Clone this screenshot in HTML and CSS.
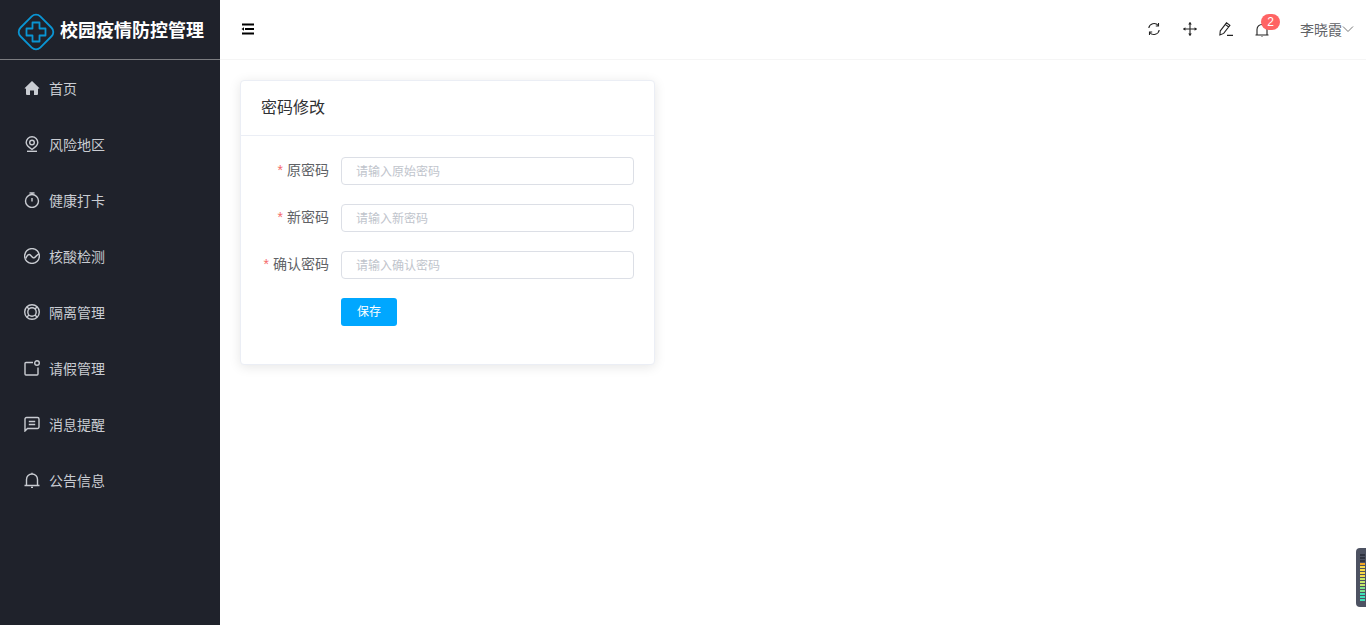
FILE: index.html
```html
<!DOCTYPE html>
<html lang="zh-CN">
<head>
  <meta charset="UTF-8" />
  <title>校园疫情防控管理</title>
  <link rel="stylesheet" href="styles.css">
</head>
<body>
  <aside class="sidebar">
    <div class="logo">
      <svg class="logo-icon" viewBox="0 0 38 38" width="38" height="38" fill="none" stroke="#0a95d3" stroke-width="1.8">
        <rect x="5" y="5" width="28" height="28" rx="6" transform="rotate(45 19 19)"/>
        <path d="M15.500 9.500h7v6h6v7h-6v6h-7v-6h-6v-7h6z" stroke-linejoin="round"/>
      </svg>
      <span class="logo-text">校园疫情防控管理</span>
    </div>
    <nav class="menu">
      <a class="menu-item">
        <svg viewBox="0 0 16 16" width="16" height="16"><path class="solid" d="M8 1 .5 8.300 1.500 8.800 2 8.500V14a1 1 0 0 0 1 1h3V10.500h4V15h3a1 1 0 0 0 1-1V8.500l.5.300 1-.5z"/></svg>
        <span>首页</span>
      </a>
      <a class="menu-item">
        <svg viewBox="0 0 16 16" width="16" height="16"><path d="M8 .8a5.800 5.800 0 0 0-5.800 5.800C2.200 9.800 8 13.500 8 13.500s5.800-3.700 5.800-6.900A5.800 5.800 0 0 0 8 .8z"/><circle cx="8" cy="6.500" r="2.300"/><path d="M3 15.300h10"/></svg>
        <span>风险地区</span>
      </a>
      <a class="menu-item">
        <svg viewBox="0 0 16 16" width="16" height="16"><circle cx="8" cy="9" r="6.500"/><path d="M5.500 1h5M8 1v1.500M8 6v3.500"/></svg>
        <span>健康打卡</span>
      </a>
      <a class="menu-item">
        <svg viewBox="0 0 16 16" width="16" height="16"><circle cx="8" cy="8" r="7.400"/><path d="M1.800 10.500C3 7 5 5.500 6.800 7.500s3 3.500 4.700 1.300 2.200-2.800 3.700-2.800"/></svg>
        <span>核酸检测</span>
      </a>
      <a class="menu-item">
        <svg viewBox="0 0 16 16" width="16" height="16"><circle cx="8" cy="8" r="7.300"/><circle cx="8" cy="8" r="4.200"/><path d="M3 3l2 2M13 3l-2 2M3 13l2-2M13 13l-2-2"/></svg>
        <span>隔离管理</span>
      </a>
      <a class="menu-item">
        <svg viewBox="0 0 16 16" width="16" height="16"><path d="M9 2.500H2a1 1 0 0 0-1 1V14a1 1 0 0 0 1 1h11a1 1 0 0 0 1-1V7.500"/><circle cx="13" cy="3" r="2.300"/></svg>
        <span>请假管理</span>
      </a>
      <a class="menu-item">
        <svg viewBox="0 0 16 16" width="16" height="16"><path d="M1 3a1.500 1.500 0 0 1 1.500-1.500h11A1.500 1.500 0 0 1 15 3v8a1.500 1.500 0 0 1-1.500 1.500H3.500L1 15z"/><path d="M4.800 5.500h6.400M4.800 8.500h6.400"/></svg>
        <span>消息提醒</span>
      </a>
      <a class="menu-item">
        <svg viewBox="0 0 16 16" width="16" height="16"><path d="M.5 13.500h15M2.500 13.500V7.500a5.500 5.500 0 0 1 11 0v6M8 2V.8M7 15.500h2"/></svg>
        <span>公告信息</span>
      </a>
    </nav>
  </aside>

  <div class="main">
    <header class="topbar">
      <svg class="fold" viewBox="0 0 14 14" width="14" height="14"><path d="M1 2.500h12M4 7h9M1 11.500h12" stroke="#000" stroke-width="2"/><path d="M0.500 7 3 5.300v3.400z" fill="#000"/></svg>
      <div class="tools">
        <svg viewBox="0 0 14 14" width="14" height="14"><path d="M1.800 6a5.300 5.300 0 0 1 9.400-2.500M12.200 8a5.300 5.300 0 0 1-9.400 2.500"/><path d="M11.500 1v3H8.800M2.500 13v-3h2.700"/></svg>
        <svg viewBox="0 0 14 14" width="14" height="14"><path d="M7 .5v13M.5 7h13"/><path class="solid" d="M7 0 8.800 2.400H5.200zM7 14 5.200 11.600H8.800zM0 7 2.400 5.200V8.800zM14 7 11.600 8.800V5.200z"/></svg>
        <svg viewBox="0 0 14 14" width="14" height="14"><path d="M1.300 8.800 7.500 .8l3.400 2.600-6.200 8-3.800 1.500zM6.300 2.400l3.400 2.600M8 13.400H14"/></svg>
        <div class="bell">
          <svg viewBox="0 0 14 14" width="14" height="14"><path d="M.5 12h13M2 12V6.500a5 5 0 0 1 10 0V12M6.500 13.800h1"/></svg>
          <span class="badge">2</span>
        </div>
      </div>
      <div class="user">
        <span>李晓霞</span>
        <svg viewBox="0 0 12 12" width="12" height="12"><path d="M1 3.500 6 8.500l5-5" stroke="#777"/></svg>
      </div>
    </header>

    <section class="content">
      <div class="card">
        <div class="card-header">密码修改</div>
        <form class="card-body">
          <div class="form-row">
            <label class="form-label"><i>*</i>原密码</label>
            <input class="form-input" placeholder="请输入原始密码">
          </div>
          <div class="form-row">
            <label class="form-label"><i>*</i>新密码</label>
            <input class="form-input" placeholder="请输入新密码">
          </div>
          <div class="form-row">
            <label class="form-label"><i>*</i>确认密码</label>
            <input class="form-input" placeholder="请输入确认密码">
          </div>
          <div class="form-row">
            <span class="form-label"></span>
            <button class="btn-save" type="button">保存</button>
          </div>
        </form>
      </div>
    </section>
  </div>

  <div class="float-widget">
    <i class="d"></i><i class="d"></i><i class="d"></i>
    <i class="o"></i><i class="y"></i><i class="y"></i><i class="y"></i><i class="y"></i>
    <i class="l"></i><i class="l"></i><i class="l"></i><i class="g"></i><i class="g"></i><i class="c"></i><i class="c"></i><i class="c"></i>
  </div>
</body>
</html>
```

FILE: styles.css
```css
* {
  box-sizing: border-box;
}

html, body {
  height: 100%;
}

body {
  margin: 0;
  display: flex;
  overflow: hidden;
  background-color: #fff;
  font-family: "Liberation Sans", "Noto Sans CJK SC", sans-serif;
  font-size: 14px;
  color: #606266;
}

/* ----------- sidebar ----------- */

.sidebar {
  width: 220px;
  flex-shrink: 0;
  background-color: #1f222b;
}

.logo {
  height: 60px;
  display: flex;
  align-items: center;
  padding-left: 17px;
  border-bottom: 1px solid #7b7c80;
}

.logo-icon {
  flex-shrink: 0;
  margin: 5px 5px 0 0;
}

.logo-text {
  padding-bottom: 2px;
  font-size: 18px;
  font-weight: bold;
  color: #fff;
  white-space: nowrap;
}

.menu {
  display: flex;
  flex-direction: column;
}

.menu-item {
  height: 56px;
  display: flex;
  align-items: center;
  gap: 9px;
  padding-left: 24px;
  color: #c9ccd2;
  font-size: 14px;
}

.menu-item svg {
  fill: none;
  stroke: #c9ccd2;
  stroke-width: 1.400;
}

.menu-item svg .solid {
  fill: #c9ccd2;
  stroke: none;
}

/* ----------- topbar ----------- */

.main {
  flex: 1;
  min-width: 0;
}

.topbar {
  height: 60px;
  display: flex;
  align-items: center;
  padding: 0 0 1px 21px;
  border-bottom: 1px solid #f5f5f5;
}

.fold {
  flex-shrink: 0;
}

.tools {
  display: flex;
  align-items: center;
  gap: 22px;
  margin-left: auto;
  margin-right: 31px;
}

.tools svg {
  display: block;
  fill: none;
  stroke: #222;
  stroke-width: 1.100;
}

.tools svg .solid {
  fill: #222;
  stroke: none;
}

.bell {
  position: relative;
  margin-top: 2px;
}

.badge {
  position: absolute;
  top: -9px;
  left: 6px;
  width: 19px;
  height: 16px;
  border-radius: 8px;
  background-color: #ff6464;
  color: #fff;
  font-size: 12px;
  line-height: 16px;
  text-align: center;
}

.user {
  display: flex;
  align-items: center;
  margin-right: 12px;
  color: #606266;
  font-size: 14px;
}

.user svg {
  fill: none;
  stroke-width: 1;
}

/* ----------- card ----------- */

.content {
  padding: 20px;
}

.card {
  width: 415px;
  height: 285px;
  background-color: #fff;
  border: 1px solid #ebeef5;
  border-radius: 4px;
  box-shadow: 0 2px 12px 0 rgba(0,0,0,0.1);
}

.card-header {
  height: 55px;
  padding-left: 20px;
  border-bottom: 1px solid #ebeef5;
  font-size: 16px;
  line-height: 53px;
  color: #303133;
}

.card-body {
  display: flex;
  flex-direction: column;
  gap: 19px;
  padding: 21px 20px 0;
}

.form-row {
  display: flex;
  align-items: center;
  height: 28px;
}

.form-label {
  width: 80px;
  padding: 0 12px 4px 0;
  text-align: right;
  font-size: 14px;
  color: #606266;
  flex-shrink: 0;
}

.form-label i {
  margin-right: 4px;
  color: #f56c6c;
  font-style: normal;
}

.form-input {
  width: 293px;
  height: 28px;
  padding: 2px 14px 0;
  border: 1px solid #dcdfe6;
  border-radius: 4px;
  outline: none;
  font-family: inherit;
  font-size: 12px;
  color: #606266;
}

.form-input::placeholder {
  color: #c0c4cc;
}

.btn-save {
  width: 56px;
  height: 28px;
  padding: 0 0 3px;
  border: 0;
  border-radius: 3px;
  background-color: #00a7ff;
  color: #fff;
  font-family: inherit;
  font-size: 12px;
}

/* ----------- floating widget ----------- */

.float-widget {
  position: fixed;
  right: 0;
  top: 548px;
  width: 10px;
  height: 59px;
  display: flex;
  flex-direction: column;
  align-items: flex-end;
  gap: 1px;
  padding: 6px 1px 0 4px;
  background-color: #4d5262;
  border-radius: 4px 0 0 4px;
}

.float-widget i {
  display: block;
  width: 5px;
  height: 2px;
  flex-shrink: 0;
}

.float-widget .d { background-color: #2f3340; }
.float-widget .o { background-color: #f5a623; }
.float-widget .y { background-color: #f5d94a; }
.float-widget .l { background-color: #c6e86b; }
.float-widget .g { background-color: #7de38c; }
.float-widget .c { background-color: #3fe0b8; }
```
